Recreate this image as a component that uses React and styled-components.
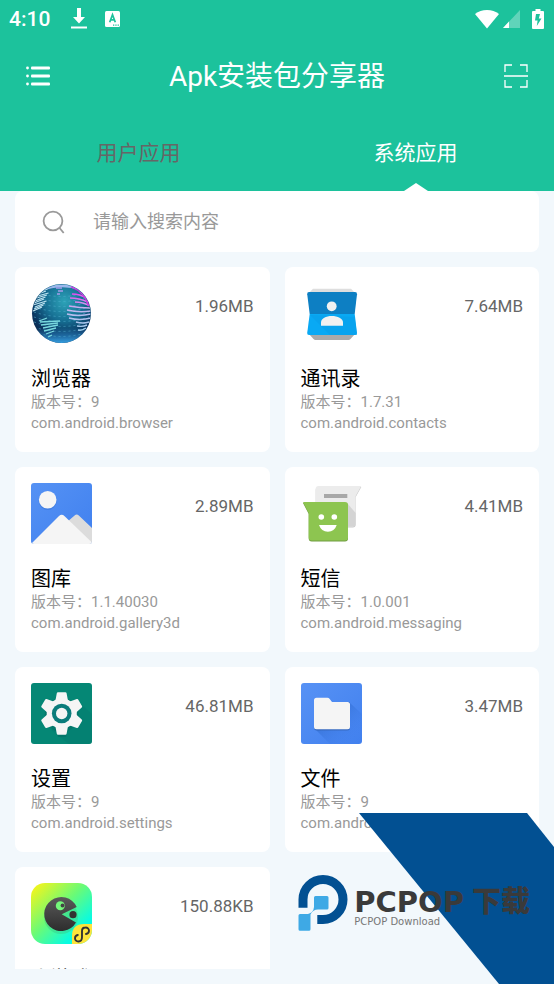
import React from "react";
import styled, { createGlobalStyle } from "styled-components";

const GlobalStyle = createGlobalStyle`
  *, *::before, *::after { box-sizing: border-box; }
  body {
    margin: 0;
    background: #f2f8fc;
    font-family: Roboto, "Noto Sans CJK SC", sans-serif;
  }
  button, input { font-family: inherit; }
  h1, h2, p, ul { margin: 0; padding: 0; font-weight: 400; }
`;

const Screen = styled.div`
  position: relative;
  display: flex;
  flex-direction: column;
  height: 100vh;
  padding-bottom: 15px;
  overflow: hidden;
`;

const Header = styled.header`
  flex: none;
  background: #1cc29c;
  color: #fff;
`;

const StatusBar = styled.div`
  display: flex;
  align-items: center;
  justify-content: space-between;
  height: 38px;
  padding: 0 10px 0 9px;
  svg { display: block; }
`;

const Clock = styled.time`
  font-size: 21px;
  font-weight: 500;
  line-height: 38px;
`;

const StatusGroup = styled.div`
  display: flex;
  align-items: center;
  gap: ${(p) => p.$gap}px;
`;

const TitleBar = styled.div`
  display: flex;
  align-items: center;
  justify-content: space-between;
  height: 76px;
  padding: 0 18px;
`;

const Title = styled.h1`
  padding-top: 2px;
  font-size: 28px;
  line-height: 40px;
`;

const IconButton = styled.button`
  display: grid;
  place-items: center;
  width: 40px;
  height: 40px;
  padding: 0;
  border: 0;
  background: none;
  color: #fff;
`;

const Tabs = styled.div`
  display: grid;
  grid-template-columns: 1fr 1fr;
`;

const Tab = styled.button`
  position: relative;
  height: 77px;
  padding: 0 0 4px;
  border: 0;
  background: none;
  font-size: 21px;
  color: ${(p) => (p.$active ? "#fff" : "#666")};
`;

const TabPointer = styled.svg`
  position: absolute;
  bottom: 0;
  left: 50%;
  transform: translateX(-50%);
`;

const SearchBox = styled.label`
  display: flex;
  flex: none;
  align-items: center;
  gap: 28px;
  height: 61px;
  margin: 0 15px 15px;
  padding: 0 27px;
  border-radius: 8px;
  background: #fff;
`;

const SearchInput = styled.input`
  flex: 1;
  min-width: 0;
  padding: 0;
  border: 0;
  outline: 0;
  background: none;
  font-size: 18px;
  line-height: 28px;
  color: #333;
  &::placeholder { color: #999; opacity: 1; }
`;

const AppGrid = styled.ul`
  display: grid;
  flex: 1;
  grid-template-columns: 1fr 1fr;
  align-content: start;
  gap: 15px;
  min-height: 0;
  margin: 0 15px;
  overflow: hidden;
  list-style: none;
`;

const Card = styled.li`
  min-width: 0;
  padding: 16px 16px 18px;
  border-radius: 8px;
  background: #fff;
`;

const CardHead = styled.div`
  display: flex;
  justify-content: space-between;
  margin-bottom: 22px;
  svg { display: block; }
`;

const AppSize = styled.span`
  padding-top: 11px;
  font-size: 17px;
  line-height: 24px;
  color: #666;
`;

const AppName = styled.h2`
  font-size: 20px;
  line-height: 26px;
  color: #000;
`;

const AppMeta = styled.p`
  font-size: 15px;
  line-height: 21px;
  color: #999;
`;

const Ribbon = styled.svg`
  position: absolute;
  right: 0;
  bottom: 0;
`;

const Brand = styled.div`
  position: absolute;
  right: 24px;
  bottom: 52px;
  display: flex;
  gap: 6px;
  white-space: nowrap;
`;

const BrandText = styled.div`
  display: flex;
  flex-direction: column;
  padding-top: 13px;
`;

const BrandName = styled.div`
  display: flex;
  gap: 8px;
  font-family: "DejaVu Sans", "Noto Sans CJK SC", sans-serif;
  font-size: 29px;
  font-weight: 900;
  line-height: 28px;
  color: #3a3a3a;
`;

const BrandNote = styled.div`
  font-family: "DejaVu Sans", sans-serif;
  font-size: 10px;
  line-height: 12px;
  color: #777;
`;

const DownloadGlyph = () => (
  <svg width="16" height="22" viewBox="0 0 16 22" fill="#fff">
    <path d="M6 0h4v9h4l-6 6.500L2 9h4z" />
    <path d="M0 18.500h16v2H0z" />
  </svg>
);

const InputGlyph = () => (
  <svg width="15" height="16" viewBox="0 0 15 16">
    <rect width="15" height="16" rx="1.500" fill="#fff" />
    <path d="M4.700 11.200 7.500 3.600l2.800 7.600M5.700 8.800h3.600" fill="none" stroke="#1cc29c" strokeWidth="1.700" />
    <path d="M8 13.500h1.300v1.200H8zm2.300 0h1.300v1.200h-1.300zm2.300 0h1.300v1.200h-1.300z" fill="#1cc29c" />
  </svg>
);

const WifiGlyph = () => (
  <svg width="24" height="20" viewBox="0 0 24 20" fill="#fff">
    <path d="M0 5C3.500 2.200 7.300 1 12 1s8.500 1.200 12 4L12 19.500z" />
  </svg>
);

const SignalGlyph = () => (
  <svg width="17" height="18" viewBox="0 0 17 18" fill="#fff">
    <path d="M17 0v18H0z" opacity=".3" />
    <path d="M6 11.500V18H0z" />
  </svg>
);

const BatteryGlyph = () => (
  <svg width="12" height="20" viewBox="0 0 12 20">
    <path d="M3.500 0h5v2H11a1 1 0 0 1 1 1v16a1 1 0 0 1-1 1H1a1 1 0 0 1-1-1V3a1 1 0 0 1 1-1h2.500z" fill="#fff" />
    <path d="M4 5h4L6.800 9.500H9.500L4.800 17 5.600 11.500H3z" fill="#1cc29c" />
  </svg>
);

const MenuGlyph = () => (
  <svg width="24" height="20" viewBox="0 0 24 20" fill="#fff">
    {[0, 8, 16].map((y) => (
      <g key={y}>
        <circle cx="1.500" cy={y + 2} r="1.400" />
        <rect x="5" y={y + 0.5} width="19" height="3" rx="1" />
      </g>
    ))}
  </svg>
);

const ScanGlyph = () => (
  <svg width="24" height="24" viewBox="0 0 24 24" fill="none" stroke="#fff" strokeWidth="1.300">
    <path d="M1 8V1h7M16 1h7v7M23 16v7h-7M8 23H1v-7M0 12h24" />
  </svg>
);

const SearchGlyph = () => (
  <svg width="23" height="24" viewBox="0 0 23 24" fill="none" stroke="#999" strokeWidth="1.800">
    <circle cx="11" cy="11" r="9.400" />
    <path d="M17.200 17.500 21.700 23" />
  </svg>
);

const IconSvg = ({ children }) => (
  <svg width="61" height="61" viewBox="0 0 61 61" aria-hidden="true">
    {children}
  </svg>
);

const leftLines = Array.from({ length: 12 }, (_, i) => i);

const BrowserIcon = () => (
  <IconSvg>
    <defs>
      <radialGradient id="globe" cx=".55" cy=".3" r=".72">
        <stop offset="0" stopColor="#2ea3b8" />
        <stop offset=".45" stopColor="#176f93" />
        <stop offset=".8" stopColor="#0b3560" />
        <stop offset="1" stopColor="#102646" />
      </radialGradient>
      <linearGradient id="globeFloor" x1="0" y1="0" x2="0" y2="1">
        <stop offset=".74" stopColor="#2f95d8" stopOpacity="0" />
        <stop offset="1" stopColor="#349fe2" />
      </linearGradient>
      <linearGradient id="globeLand" x1="0" y1="0" x2="0" y2="1">
        <stop offset="0" stopColor="#e44cf0" />
        <stop offset=".4" stopColor="#c5b5f0" />
        <stop offset="1" stopColor="#9ccdeb" />
      </linearGradient>
      <clipPath id="globeClip"><circle cx="30.500" cy="30.500" r="29" /></clipPath>
    </defs>
    <circle cx="30.500" cy="30.500" r="29.500" fill="url(#globe)" />
    <circle cx="30.500" cy="30.500" r="29.500" fill="url(#globeFloor)" />
    <g clipPath="url(#globeClip)" fill="none">
      <path d="M10 7Q30-1 50 6" stroke="#9bb7eb" strokeWidth="3" />
      <g stroke="#55b2d2" strokeWidth=".8" strokeDasharray="2 3" opacity=".7">
        {[12, 17, 22, 27, 32, 37, 42, 47, 52].map((y) => (
          <path key={y} d={`M3 ${y - 3}Q30 ${y + 6} 58 ${y - 3}`} />
        ))}
      </g>
      <g stroke="#bfe5f2" strokeWidth="1.100">
        {leftLines.map((i) => (
          <path key={i} d={`M${2 + (i % 3)} ${28 - i * 2}L${11 + (i % 4) + i / 2} ${24 - i * 2}`} />
        ))}
      </g>
      <path d="M25 5h6M27 8h5M26 11h3" stroke="#a49ceb" strokeWidth="1.500" />
      <path d="M8 38l8-3M9 39l20-1M10 42l17-2M12 45l15-3M13 48l12-3M15 51l8-3M17 54l4-2" stroke="#79d9df" strokeWidth="1.300" />
      <path d="M41 11q8 0 14 4M39 15q9 0 18 4M44 19q8 0 15 4M38 23q11 2 21 2M36 27q12 3 24 1M36 31q12 3 24 0M38 35q11 3 22 0M45 39q7 2 13 0M46 43q6 1 10-1M47 47q4 1 8-2" stroke="url(#globeLand)" strokeWidth="1.400" />
      <path d="M40 3Q55 9 58 23" stroke="#cc39df" strokeWidth="2.500" />
    </g>
  </IconSvg>
);

const ContactsIcon = () => (
  <IconSvg>
    <path d="M12 5.700h38L54 10H8z" fill="#dedede" />
    <path d="M8 51h46l-4.500 5q-.8 1-2 1h-33q-1.200 0-2-1z" fill="#aaa" />
    <path d="M8 9h46q2.200 0 2 2.200L53.700 31H8.700L6.200 11.200Q6 9 8 9z" fill="#0d7fc3" />
    <path d="M8.700 31h45L56 50q.2 2-2 2H8q-2 0-1.800-2z" fill="#09a9f4" />
    <path d="M9 32l20 20h27L53.700 34z" fill="#079de8" opacity=".5" />
    <circle cx="30.700" cy="23.300" r="4.900" fill="#f1f1f1" />
    <path d="M20 42.700v-3.200c0-4 5-6.500 10.800-6.500S42 35.500 42 39.500v3.200z" fill="#f1f1f1" />
  </IconSvg>
);

const GalleryIcon = () => (
  <IconSvg>
    <defs>
      <linearGradient id="photoSky" x1="0" y1="0" x2="1" y2="1">
        <stop offset="0" stopColor="#5592f4" />
        <stop offset="1" stopColor="#4080ef" />
      </linearGradient>
      <clipPath id="photoClip"><rect width="61" height="61" rx="3" /></clipPath>
    </defs>
    <g clipPath="url(#photoClip)">
      <path d="M0 0h61v61H0z" fill="url(#photoSky)" />
      <circle cx="16.700" cy="18" r="9" fill="#3974d5" opacity=".55" />
      <circle cx="16.700" cy="16.700" r="8.800" fill="#f5f5f5" />
      <path d="M36 39l7.600-6.500q2.100-1.800 4.200 0L61 45v16H50z" fill="#dcdcdc" />
      <path d="M0 61L28 33q2.700-2.500 5.400 0L61 59.500V61z" fill="#f5f5f5" />
    </g>
  </IconSvg>
);

const MessagesIcon = () => (
  <IconSvg>
    <path d="M17.500 4H60.300L54.700 14v27.500q0 3-3 3H17.500q-2.800 0-2.800-3V7q0-3 2.800-3z" fill="#c9c9c9" />
    <path d="M17.500 3H60.300L54.700 13v27.500q0 3-3 3H17.500q-2.800 0-2.800-3V6q0-3 2.800-3z" fill="#ececec" />
    <path d="M46 20l8.700 10v11q0 2.500-3 2.500H45z" fill="#d4d4d4" />
    <path d="M23 11h23.300v4H23z" fill="#a8a8a8" />
    <path d="M2 20h42q3 0 3 3v32.500q0 3-3 3H10.700q-3 0-3-3V31z" fill="#719d42" />
    <path d="M2 19h42q3 0 3 3v32.500q0 3-3 3H10.700q-3 0-3-3V30z" fill="#8dc550" />
    <circle cx="20.300" cy="34" r="2.800" fill="#fff" />
    <circle cx="33.300" cy="34" r="2.800" fill="#fff" />
    <path d="M18 42h17.700q-2.200 6.700-8.800 6.700T18 42z" fill="#fff" />
  </IconSvg>
);

const SettingsIcon = () => (
  <IconSvg>
    <rect width="61" height="61" rx="3" fill="#058775" />
    <path d="M50 21L61 31v27q0 3-3 3H38L20 47z" fill="#047b70" opacity=".5" />
    <g fill="#036f65" opacity=".6"><circle cx="30.700" cy="32" r="17" /><path d="M26 50h10l-1 4h-8z" /></g>
    <g fill="#f5f5f5">
      <circle cx="30.700" cy="30.500" r="15" />
      {[0, 60, 120, 180, 240, 300].map((a) => (
        <path key={a} transform={`rotate(${a} 30.700 30.500)`} d="M27 9.200h7.400q1 0 1.200 1l1.200 6.500 3 4H21.600l3-4 1.200-6.500q.2-1 1.200-1z" />
      ))}
    </g>
    <circle cx="30.700" cy="30.500" r="9.800" fill="#0b7c7b" />
    <circle cx="30.700" cy="30.500" r="5.700" fill="#f5f5f5" />
  </IconSvg>
);

const FilesIcon = () => (
  <IconSvg>
    <defs>
      <linearGradient id="folderTile" x1="0" y1="0" x2="1" y2="1">
        <stop offset="0" stopColor="#5792f5" />
        <stop offset="1" stopColor="#4180ee" />
      </linearGradient>
      <linearGradient id="folderShade" x1="0" y1="0" x2="1" y2="1">
        <stop offset=".3" stopColor="#3470d4" />
        <stop offset=".85" stopColor="#4180ee" stopOpacity="0" />
      </linearGradient>
    </defs>
    <rect width="61" height="61" rx="3" fill="url(#folderTile)" />
    <path d="M49 20l12 11v27q0 3-3 3H29L14 46z" fill="url(#folderShade)" opacity=".8" />
    <path d="M13 19h36v26q0 2.500-2.500 2.500h-31Q13 47.500 13 45z" fill="#345fa9" opacity=".6" />
    <path d="M15.500 14.700h11q1.200 0 2 1L31 19h15.500q2.500 0 2.500 2.500v22.300q0 2.500-2.500 2.500h-31q-2.500 0-2.500-2.500V17.200q0-2.500 2.500-2.500z" fill="#f5f5f5" />
  </IconSvg>
);

const GameIcon = () => (
  <IconSvg>
    <defs>
      <linearGradient id="gameTile" x1="0" y1="0" x2="1" y2="1">
        <stop offset=".05" stopColor="#f4f51c" />
        <stop offset=".45" stopColor="#69fb77" />
        <stop offset=".78" stopColor="#09fbe1" />
      </linearGradient>
      <linearGradient id="gameBody" x1="0" y1="0" x2="0" y2="1">
        <stop offset="0" stopColor="#5a5a5a" />
        <stop offset="1" stopColor="#2d2d2d" />
      </linearGradient>
      <clipPath id="gameClip"><rect width="61" height="61" rx="14" /></clipPath>
    </defs>
    <g clipPath="url(#gameClip)">
      <path d="M0 0h61v61H0z" fill="url(#gameTile)" />
      <circle cx="30" cy="34" r="17" fill="#38c583" opacity=".4" />
      <path d="M30.700 31.300L45.700 24A17 17 0 1 0 45 39.500z" fill="url(#gameBody)" />
      <circle cx="29.300" cy="22.700" r="4.500" fill="#74f77a" />
      <circle cx="31.500" cy="22.500" r="1.900" fill="#444" />
      <circle cx="42" cy="31.700" r="3.600" fill="#333" />
      <path d="M61 41H53q-12 0-12 12v8h20z" fill="#fde33b" />
      <path d="M51 54c0 3-1.500 4.500-3.500 4.500A3.300 3.300 0 0 1 44 55.200c0-1.700 1-2.800 2.800-3.200M51 54v-6c0-2 1.300-3.500 3.500-3.500A3.300 3.300 0 0 1 58 47.800c0 1.700-1.200 2.900-3 3.200" fill="none" stroke="#333" strokeWidth="1.900" strokeLinecap="round" />
    </g>
  </IconSvg>
);

const BrandMark = () => (
  <svg width="50" height="57" viewBox="0 0 50 57" aria-hidden="true">
    <path d="M5 32.700V24.500A20 20 0 1 1 25 44.500H19.300" fill="none" stroke="#025092" strokeWidth="9" />
    <path d="M17.500 21H29q1.500 0 1.500 1.500V33q0 1.500-1.500 1.500H20q-5 0-7.500 5v14.700q0 1.600-1.600 1.600H2Q.5 55.800.5 54.200V40.500Q.5 39 2 39h8q5.500-1.500 6-7v-9.500q0-1.500 1.500-1.500z" fill="#3ea9e5" />
  </svg>
);

const apps = [
  { name: "浏览器", version: "9", pkg: "com.android.browser", size: "1.96MB", Icon: BrowserIcon },
  { name: "通讯录", version: "1.7.31", pkg: "com.android.contacts", size: "7.64MB", Icon: ContactsIcon },
  { name: "图库", version: "1.1.40030", pkg: "com.android.gallery3d", size: "2.89MB", Icon: GalleryIcon },
  { name: "短信", version: "1.0.001", pkg: "com.android.messaging", size: "4.41MB", Icon: MessagesIcon },
  { name: "设置", version: "9", pkg: "com.android.settings", size: "46.81MB", Icon: SettingsIcon },
  { name: "文件", version: "9", pkg: "com.android.documentsui", size: "3.47MB", Icon: FilesIcon },
  { name: "小游戏", size: "150.88KB", Icon: GameIcon },
];

export default function App() {
  return (
    <Screen>
      <GlobalStyle />
      <Header>
        <StatusBar>
          <StatusGroup $gap={21}>
            <Clock>4:10</Clock>
            <StatusGroup $gap={18}>
              <DownloadGlyph />
              <InputGlyph />
            </StatusGroup>
          </StatusGroup>
          <StatusGroup $gap={12}>
            <StatusGroup $gap={4}>
              <WifiGlyph />
              <SignalGlyph />
            </StatusGroup>
            <BatteryGlyph />
          </StatusGroup>
        </StatusBar>
        <TitleBar>
          <IconButton type="button" aria-label="菜单"><MenuGlyph /></IconButton>
          <Title>Apk安装包分享器</Title>
          <IconButton type="button" aria-label="扫一扫"><ScanGlyph /></IconButton>
        </TitleBar>
        <Tabs role="tablist">
          <Tab type="button" role="tab" aria-selected="false">用户应用</Tab>
          <Tab type="button" role="tab" aria-selected="true" $active>
            系统应用
            <TabPointer width="24" height="8" viewBox="0 0 24 8">
              <path d="M0 8L12 0l12 8z" fill="#fff" />
            </TabPointer>
          </Tab>
        </Tabs>
      </Header>
      <SearchBox>
        <SearchGlyph />
        <SearchInput type="text" aria-label="搜索" placeholder="请输入搜索内容" />
      </SearchBox>
      <AppGrid>
        {apps.map(({ name, version, pkg, size, Icon }) => (
          <Card key={name}>
            <CardHead>
              <Icon />
              <AppSize>{size}</AppSize>
            </CardHead>
            <AppName>{name}</AppName>
            {version && <AppMeta>版本号：{version}</AppMeta>}
            {pkg && <AppMeta>{pkg}</AppMeta>}
          </Card>
        ))}
      </AppGrid>
      <Ribbon width="195" height="171" viewBox="0 0 195 171" aria-hidden="true">
        <path d="M0 0h168l27 34v137h-55z" fill="#025092" />
      </Ribbon>
      <Brand>
        <BrandMark />
        <BrandText>
          <BrandName><span>PCPOP</span><span>下载</span></BrandName>
          <BrandNote>PCPOP Download</BrandNote>
        </BrandText>
      </Brand>
    </Screen>
  );
}
